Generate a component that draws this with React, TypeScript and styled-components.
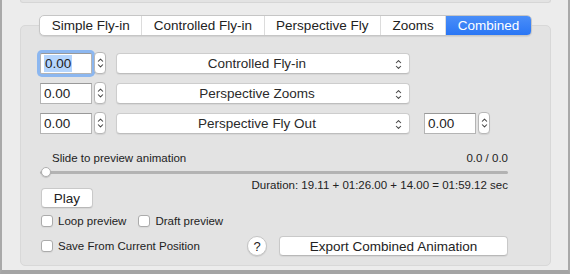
import React from "react";
import styled, { createGlobalStyle } from "styled-components";

const GlobalStyle = createGlobalStyle`
  html, body {
    margin: 0;
    padding: 0;
    background: #ececec;
  }
  * {
    box-sizing: border-box;
  }
`;

const Window = styled.div`
  width: 570px;
  height: 274px;
  background: #ececec;
  border-left: 2px solid #a9a9a9;
  border-right: 2px solid #a9a9a9;
  border-bottom: 4px solid #a4a4a4;
  font-family: "Liberation Sans", Arial, sans-serif;
  color: #222;
  display: flex;
  flex-direction: column;
  overflow: hidden;
`;

const PanelStub = styled.div`
  height: 3px;
  margin: 0 17px 0 18px;
  background: #e3e3e3;
  border: 1px solid #d6d6d6;
  border-top: none;
  border-radius: 0 0 4px 4px;
`;

const TabBar = styled.div`
  align-self: center;
  margin-top: 12px;
  margin-left: 1px;
  display: flex;
  height: 21px;
  background: #fff;
  border: 1px solid #c6c6c6;
  border-radius: 5px;
  box-shadow: 0 1px 1px rgba(0, 0, 0, 0.08);
  position: relative;
  z-index: 1;
  overflow: hidden;
`;

const Tab = styled.div<{ $active?: boolean }>`
  display: flex;
  align-items: center;
  padding: 0 11.5px;
  font-size: 13.5px;
  color: ${(p) => (p.$active ? "#fff" : "#222")};
  background: ${(p) =>
    p.$active ? "linear-gradient(#4a8ef8, #2a76f5)" : "transparent"};
  & + & {
    border-left: 1px solid #dcdcdc;
  }
`;

const GroupBox = styled.div`
  margin: -11px 17px 0 18px;
  flex: 1;
  background: #e3e3e3;
  border: 1px solid #d8d8d8;
  border-radius: 5px;
  margin-bottom: 4px;
  padding: 26px 42px 0 19px;
  display: flex;
  flex-direction: column;
`;

const Rows = styled.div`
  display: flex;
  flex-direction: column;
  gap: 8px;
`;

const Row = styled.div`
  display: flex;
  align-items: center;
  height: 22px;
`;

const NumberField = styled.div<{ $focused?: boolean }>`
  width: 52px;
  height: 21px;
  background: #fff;
  border: 1px solid #b4b4b4;
  border-top-color: #999;
  display: flex;
  align-items: center;
  padding-left: 3px;
  font-size: 13.5px;
  box-shadow: ${(p) => (p.$focused ? "0 0 0 3px #8cb7f0" : "none")};
  border-radius: ${(p) => (p.$focused ? "2px" : "0")};
`;

const Selected = styled.span`
  background: #b5d5fd;
  padding: 1px 1px;
`;

const StepperBox = styled.div`
  width: 12px;
  height: 22px;
  margin-left: 2px;
  background: #fff;
  border: 1px solid #b8b8b8;
  border-radius: 4px;
  display: flex;
  align-items: center;
  justify-content: center;
  box-shadow: 0 1px 1px rgba(0, 0, 0, 0.08);
`;

const Popup = styled.div`
  width: 294px;
  height: 21px;
  margin-left: 10px;
  background: #fff;
  border: 1px solid #cdcdcd;
  border-bottom-color: #bdbdbd;
  border-radius: 4px;
  box-shadow: 0 1px 1px rgba(0, 0, 0, 0.06);
  display: flex;
  align-items: center;
  font-size: 13.5px;
  color: #2a2a2a;
  position: relative;
  padding-right: 12px;
`;

const PopupLabel = styled.span`
  flex: 1;
  text-align: center;
`;

const PopupArrows = styled.span`
  position: absolute;
  right: 7px;
  top: 4px;
  display: flex;
`;

const SideField = styled.div`
  margin-left: 14px;
  display: flex;
  align-items: center;
`;

const SliderBlock = styled.div`
  margin-top: 17px;
  display: flex;
  flex-direction: column;
`;

const SliderHead = styled.div`
  display: flex;
  justify-content: space-between;
  padding-left: 12px;
  font-size: 11.5px;
  line-height: 14px;
`;

const Track = styled.div`
  margin-top: 2px;
  height: 10px;
  position: relative;
  display: flex;
  align-items: center;
  &::before {
    content: "";
    flex: 1;
    height: 3px;
    background: #b3b3b3;
    border-radius: 2px;
  }
`;

const Thumb = styled.div`
  position: absolute;
  left: 1px;
  top: 0;
  width: 10px;
  height: 10px;
  border-radius: 50%;
  background: #fff;
  border: 1px solid #b0b0b0;
  box-shadow: 0 1px 1px rgba(0, 0, 0, 0.15);
`;

const Middle = styled.div`
  margin-top: 1px;
  display: flex;
  justify-content: space-between;
  align-items: flex-start;
`;

const LeftStack = styled.div`
  padding-top: 10px;
  padding-left: 1px;
  display: flex;
  flex-direction: column;
  gap: 6px;
`;

const SmallText = styled.div`
  font-size: 11.5px;
  line-height: 14px;
`;

const PushButton = styled.div<{ $width: number }>`
  width: ${(p) => p.$width}px;
  height: 20px;
  background: #fff;
  border: 1px solid #c9c9c9;
  border-bottom-color: #b8b8b8;
  border-radius: 4px;
  box-shadow: 0 1px 1px rgba(0, 0, 0, 0.06);
  display: flex;
  align-items: center;
  justify-content: center;
  font-size: 13.5px;
`;

const CheckRow = styled.div`
  display: flex;
  align-items: center;
  gap: 12px;
`;

const CheckItem = styled.label`
  display: flex;
  align-items: center;
  gap: 5px;
  font-size: 11.5px;
  line-height: 14px;
`;

const Box = styled.span`
  width: 12px;
  height: 12px;
  background: #fff;
  border: 1px solid #ababab;
  border-radius: 3px;
  box-shadow: 0 1px 1px rgba(0, 0, 0, 0.05);
`;

const BottomRow = styled.div`
  margin-top: 8px;
  padding-left: 1px;
  display: flex;
  align-items: center;
`;

const HelpButton = styled.div`
  margin-left: auto;
  margin-right: 12px;
  width: 20px;
  height: 20px;
  border-radius: 50%;
  background: #fff;
  border: 1px solid #c4c4c4;
  box-shadow: 0 1px 1px rgba(0, 0, 0, 0.1);
  display: flex;
  align-items: center;
  justify-content: center;
  font-size: 13px;
`;

const Chevrons = ({ w, h }: { w: number; h: number }) => (
  <svg width={w} height={h} viewBox="0 0 8 14">
    <path
      d="M1.5 5 L4 2.5 L6.5 5 M1.5 9 L4 11.5 L6.5 9"
      fill="none"
      stroke="#444"
      strokeWidth="1.2"
      strokeLinecap="round"
      strokeLinejoin="round"
    />
  </svg>
);

const Stepper = () => (
  <StepperBox>
    <Chevrons w={7} h={14} />
  </StepperBox>
);

const Check = ({ label }: { label: string }) => (
  <CheckItem>
    <Box />
    {label}
  </CheckItem>
);

const tabs = [
  "Simple Fly-in",
  "Controlled Fly-in",
  "Perspective Fly",
  "Zooms",
  "Combined",
];

const rows = [
  { name: "Controlled Fly-in", focused: true, side: false },
  { name: "Perspective Zooms", focused: false, side: false },
  { name: "Perspective Fly Out", focused: false, side: true },
];

export default function App() {
  return (
    <>
      <GlobalStyle />
      <Window>
        <PanelStub />
        <TabBar>
          {tabs.map((t) => (
            <Tab key={t} $active={t === "Combined"}>
              {t}
            </Tab>
          ))}
        </TabBar>
        <GroupBox>
          <Rows>
            {rows.map((r) => (
              <Row key={r.name}>
                <NumberField $focused={r.focused}>
                  {r.focused ? <Selected>0.00</Selected> : "0.00"}
                </NumberField>
                <Stepper />
                <Popup>
                  <PopupLabel>{r.name}</PopupLabel>
                  <PopupArrows>
                    <Chevrons w={7} h={13} />
                  </PopupArrows>
                </Popup>
                {r.side && (
                  <SideField>
                    <NumberField>0.00</NumberField>
                    <Stepper />
                  </SideField>
                )}
              </Row>
            ))}
          </Rows>

          <SliderBlock>
            <SliderHead>
              <span>Slide to preview animation</span>
              <span>0.0 / 0.0</span>
            </SliderHead>
            <Track>
              <Thumb />
            </Track>
          </SliderBlock>

          <Middle>
            <LeftStack>
              <PushButton $width={52}>Play</PushButton>
              <CheckRow>
                <Check label="Loop preview" />
                <Check label="Draft preview" />
              </CheckRow>
            </LeftStack>
            <SmallText>
              Duration: 19.11 + 01:26.00 + 14.00 = 01:59.12 sec
            </SmallText>
          </Middle>

          <BottomRow>
            <Check label="Save From Current Position" />
            <HelpButton>?</HelpButton>
            <PushButton $width={229}>Export Combined Animation</PushButton>
          </BottomRow>
        </GroupBox>
      </Window>
    </>
  );
}
